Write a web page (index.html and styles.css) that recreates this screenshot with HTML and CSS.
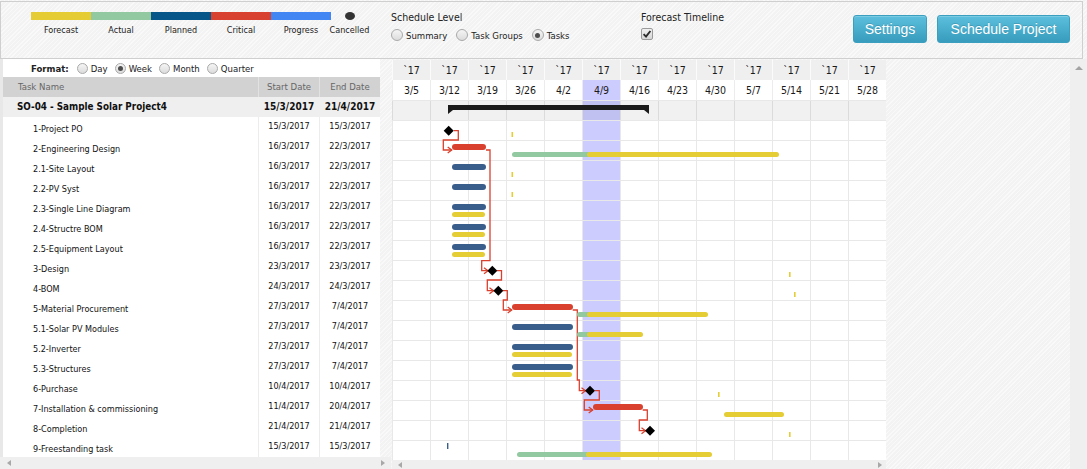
FILE: index.html
```html
<!DOCTYPE html>
<html lang="en">
<head>
<meta charset="utf-8">
<title>Schedule</title>
<link rel="stylesheet" href="styles.css">
</head>
<body>
<header class="toolbar">
  <div class="legend">
    <div class="lg-item"><span class="swatch sw-forecast"></span><span class="lg-label">Forecast</span></div>
    <div class="lg-item"><span class="swatch sw-actual"></span><span class="lg-label">Actual</span></div>
    <div class="lg-item"><span class="swatch sw-planned"></span><span class="lg-label">Planned</span></div>
    <div class="lg-item"><span class="swatch sw-critical"></span><span class="lg-label">Critical</span></div>
    <div class="lg-item"><span class="swatch sw-progress"></span><span class="lg-label">Progress</span></div>
    <div class="lg-item lg-cancel"><span class="dot"></span><span class="lg-label">Cancelled</span></div>
  </div>
  <div class="sched">
    <div class="group-title">Schedule Level</div>
    <div class="options">
      <label class="opt"><span class="rb"></span>Summary</label>
      <label class="opt"><span class="rb"></span>Task Groups</label>
      <label class="opt"><span class="rb on"></span>Tasks</label>
    </div>
  </div>
  <div class="forecast">
    <div class="group-title">Forecast Timeline</div>
    <span class="cb"><svg width="12" height="12" viewBox="0 0 12 12"><polyline points="2.6,6.2 5,8.6 9.4,3" fill="none" stroke="#2b2b2b" stroke-width="1.9"/></svg></span>
  </div>
  <div class="buttons">
    <button class="btn btn-settings">Settings</button>
    <button class="btn btn-schedule">Schedule Project</button>
  </div>
</header>

<main class="workspace">
  <section class="tasks">
    <div class="format">
      <span class="format-title">Format:</span>
      <label class="fopt"><span class="rb sm"></span>Day</label>
      <label class="fopt"><span class="rb sm on"></span>Week</label>
      <label class="fopt"><span class="rb sm"></span>Month</label>
      <label class="fopt"><span class="rb sm"></span>Quarter</label>
    </div>
    <div class="trow thead"><span class="tn">Task Name</span><span class="td">Start Date</span><span class="td">End Date</span></div>
    <div class="trow tsum"><span class="tn">SO-04 - Sample Solar Project4</span><span class="td">15/3/2017</span><span class="td">21/4/2017</span></div>
    <div class="trow"><span class="tn">1-Project PO</span><span class="td">15/3/2017</span><span class="td">15/3/2017</span></div>
    <div class="trow"><span class="tn">2-Engineering Design</span><span class="td">16/3/2017</span><span class="td">22/3/2017</span></div>
    <div class="trow"><span class="tn">2.1-Site Layout</span><span class="td">16/3/2017</span><span class="td">22/3/2017</span></div>
    <div class="trow"><span class="tn">2.2-PV Syst</span><span class="td">16/3/2017</span><span class="td">22/3/2017</span></div>
    <div class="trow"><span class="tn">2.3-Single Line Diagram</span><span class="td">16/3/2017</span><span class="td">22/3/2017</span></div>
    <div class="trow"><span class="tn">2.4-Structre BOM</span><span class="td">16/3/2017</span><span class="td">22/3/2017</span></div>
    <div class="trow"><span class="tn">2.5-Equipment Layout</span><span class="td">16/3/2017</span><span class="td">22/3/2017</span></div>
    <div class="trow"><span class="tn">3-Design</span><span class="td">23/3/2017</span><span class="td">23/3/2017</span></div>
    <div class="trow"><span class="tn">4-BOM</span><span class="td">24/3/2017</span><span class="td">24/3/2017</span></div>
    <div class="trow"><span class="tn">5-Material Procurement</span><span class="td">27/3/2017</span><span class="td">7/4/2017</span></div>
    <div class="trow"><span class="tn">5.1-Solar PV Modules</span><span class="td">27/3/2017</span><span class="td">7/4/2017</span></div>
    <div class="trow"><span class="tn">5.2-Inverter</span><span class="td">27/3/2017</span><span class="td">7/4/2017</span></div>
    <div class="trow"><span class="tn">5.3-Structures</span><span class="td">27/3/2017</span><span class="td">7/4/2017</span></div>
    <div class="trow"><span class="tn">6-Purchase</span><span class="td">10/4/2017</span><span class="td">10/4/2017</span></div>
    <div class="trow"><span class="tn">7-Installation &amp; commissioning</span><span class="td">11/4/2017</span><span class="td">20/4/2017</span></div>
    <div class="trow"><span class="tn">8-Completion</span><span class="td">21/4/2017</span><span class="td">21/4/2017</span></div>
    <div class="trow"><span class="tn">9-Freestanding task</span><span class="td">15/3/2017</span><span class="td">15/3/2017</span></div>
    <div class="hscroll hscroll-left"><span class="arr arr-l"></span><span class="arr arr-r"></span></div>
  </section>

  <section class="gantt">
    <div class="ghead gh1">
      <span>`17</span><span>`17</span><span>`17</span><span>`17</span><span>`17</span><span>`17</span><span>`17</span><span>`17</span><span>`17</span><span>`17</span><span>`17</span><span>`17</span><span>`17</span>
    </div>
    <div class="ghead gh2">
      <span>3/5</span><span>3/12</span><span>3/19</span><span>3/26</span><span>4/2</span><span class="today">4/9</span><span>4/16</span><span>4/23</span><span>4/30</span><span>5/7</span><span>5/14</span><span>5/21</span><span>5/28</span>
    </div>
    <div class="gbody">
      <div class="grow gsum"></div>
      <div class="grow"></div><div class="grow"></div><div class="grow"></div><div class="grow"></div><div class="grow"></div><div class="grow"></div>
      <div class="grow"></div><div class="grow"></div><div class="grow"></div><div class="grow"></div><div class="grow"></div><div class="grow"></div>
      <div class="grow"></div><div class="grow"></div><div class="grow"></div><div class="grow"></div><div class="grow"></div>
      <svg class="chart" width="494" height="360" viewBox="0 0 494 360">
        <!-- summary bar -->
        <polygon points="56,5 257,5 257,14 252,10 61,10 56,14" fill="#1b1b1b"/>
        <!-- connectors -->
        <g fill="none" stroke="#d9402d" stroke-width="1.3">
          <polyline points="61.7,30.7 66.3,30.7 66.3,40 51.3,40 51.3,50 59.7,50"/>
          <polyline points="55.7,47 59.7,50 55.7,53"/>
          <polyline points="94,50 98,50 98,160.7 89.7,160.7 89.7,170.7 96,170.7"/>
          <polyline points="92,167.7 96,170.7 92,173.7"/>
          <polyline points="105,170.7 109.5,170.7 109.5,180 95.3,180 95.3,190.7 101.5,190.7"/>
          <polyline points="97.5,187.7 101.5,190.7 97.5,193.7"/>
          <polyline points="111,190.7 115.3,190.7 115.3,200 111.3,200 111.3,210 119.7,210"/>
          <polyline points="115.7,207 119.7,210 115.7,213"/>
          <polyline points="180.7,210 185.3,210 185.3,280 187.3,280 187.3,290.7 193.5,290.7"/>
          <polyline points="189.5,287.7 193.5,290.7 189.5,293.7"/>
          <polyline points="203,290.7 207.3,290.7 207.3,300 192.3,300 192.3,310 200.7,310"/>
          <polyline points="196.7,307 200.7,310 196.7,313"/>
          <polyline points="250.7,310 255.3,310 255.3,320 247.3,320 247.3,330.7 253.5,330.7"/>
          <polyline points="249.5,327.7 253.5,330.7 249.5,333.7"/>
        </g>
        <!-- row 1 -->
        <rect x="119.5" y="32" width="1.6" height="5" fill="#e5cd35"/>
        <!-- row 2 -->
        <rect x="60" y="44" width="34" height="6" rx="3" fill="#d9402d"/>
        <rect x="120" y="52" width="78" height="5" rx="2.5" fill="#93c9a0"/>
        <rect x="195" y="52" width="192" height="5" rx="2.5" fill="#e5cd35"/>
        <!-- row 3,4 -->
        <rect x="60" y="64" width="34" height="6" rx="3" fill="#3a5e8c"/>
        <rect x="119.5" y="72" width="1.6" height="5" fill="#e5cd35"/>
        <rect x="60" y="84" width="34" height="6" rx="3" fill="#3a5e8c"/>
        <rect x="119.5" y="92" width="1.6" height="5" fill="#e5cd35"/>
        <!-- row 5,6,7 -->
        <rect x="60" y="104" width="34" height="6" rx="3" fill="#3a5e8c"/>
        <rect x="60" y="112" width="33" height="5" rx="2.5" fill="#e5cd35"/>
        <rect x="60" y="124" width="34" height="6" rx="3" fill="#3a5e8c"/>
        <rect x="60" y="132" width="33" height="5" rx="2.5" fill="#e5cd35"/>
        <rect x="60" y="144" width="34" height="6" rx="3" fill="#3a5e8c"/>
        <rect x="60" y="152" width="33" height="5" rx="2.5" fill="#e5cd35"/>
        <!-- row 8,9 ticks -->
        <rect x="397" y="172" width="1.6" height="5" fill="#e5cd35"/>
        <rect x="402" y="192" width="1.6" height="5" fill="#e5cd35"/>
        <!-- row 10 -->
        <rect x="120" y="204" width="61" height="6" rx="3" fill="#d9402d"/>
        <rect x="185" y="212" width="14" height="5" rx="2.5" fill="#93c9a0"/>
        <rect x="195" y="212" width="121" height="5" rx="2.5" fill="#e5cd35"/>
        <!-- row 11 -->
        <rect x="120" y="224" width="61" height="6" rx="3" fill="#3a5e8c"/>
        <rect x="185" y="232" width="14" height="5" rx="2.5" fill="#93c9a0"/>
        <rect x="195" y="232" width="56" height="5" rx="2.5" fill="#e5cd35"/>
        <!-- row 12,13 -->
        <rect x="120" y="244" width="61" height="6" rx="3" fill="#3a5e8c"/>
        <rect x="120" y="252" width="60" height="5" rx="2.5" fill="#e5cd35"/>
        <rect x="120" y="264" width="61" height="6" rx="3" fill="#3a5e8c"/>
        <rect x="120" y="272" width="60" height="5" rx="2.5" fill="#e5cd35"/>
        <!-- row 14 -->
        <rect x="326" y="292" width="1.6" height="5" fill="#e5cd35"/>
        <!-- row 15 -->
        <rect x="201" y="304" width="50" height="6" rx="3" fill="#d9402d"/>
        <rect x="332" y="312" width="60" height="5" rx="2.5" fill="#e5cd35"/>
        <!-- row 16 -->
        <rect x="397" y="332" width="1.6" height="5" fill="#e5cd35"/>
        <!-- row 17 -->
        <rect x="55" y="343" width="1.4" height="6" fill="#3a5e8c"/>
        <rect x="125" y="352" width="72" height="5" rx="2.5" fill="#93c9a0"/>
        <rect x="194" y="352" width="126" height="5" rx="2.5" fill="#e5cd35"/>
        <!-- milestones -->
        <g fill="#000">
          <path d="M51.7 30.7 L56.7 25.7 L61.7 30.7 L56.7 35.7 Z"/>
          <path d="M95.3 170.7 L100.3 165.7 L105.3 170.7 L100.3 175.7 Z"/>
          <path d="M101.3 190.7 L106.3 185.7 L111.3 190.7 L106.3 195.7 Z"/>
          <path d="M193 290.7 L198 285.7 L203 290.7 L198 295.7 Z"/>
          <path d="M253 330.7 L258 325.7 L263 330.7 L258 335.7 Z"/>
        </g>
      </svg>
    </div>
    <div class="hscroll hscroll-gantt"><span class="arr arr-l"></span><span class="arr arr-r"></span></div>
  </section>

  <div class="spacer"></div>
  <div class="vscroll"><span class="arr arr-u"></span></div>
</main>
</body>
</html>
```

FILE: styles.css
```css
* {
  box-sizing: border-box;
  margin: 0;
  padding: 0;
}

html, body {
  width: 1087px;
  height: 469px;
  overflow: hidden;
}

body {
  font-family: "DejaVu Sans Condensed", "DejaVu Sans", sans-serif;
  color: #1a1a1a;
  background-color: #f6f6f6;
  background-image: repeating-linear-gradient(135deg, #f9f9f9 0 1px, #f3f3f3 1px 3px);
}

/* ---------- toolbar ---------- */
.toolbar {
  display: flex;
  align-items: flex-start;
  width: 1083px;
  height: 58px;
  margin-top: 1px;
  padding: 9px 12px 0 30px;
  border: 1px solid #cfcfcf;
}

.legend {
  display: flex;
}

.lg-item {
  display: flex;
  flex-direction: column;
  align-items: center;
  width: 60px;
}

.lg-cancel {
  width: 37px;
}

.swatch {
  display: block;
  width: 60px;
  height: 8px;
  margin-top: 1px;
}

.sw-forecast { background: #e5cc34; }
.sw-actual { background: #93c9a0; }
.sw-planned { background: #07568a; }
.sw-critical { background: #d8412f; }
.sw-progress { background: #4286f4; }

.dot {
  display: block;
  width: 10px;
  height: 8px;
  margin-top: 1px;
  border-radius: 50%;
  background: #333;
}

.lg-label {
  margin-top: 4px;
  font-size: 9px;
  line-height: 12px;
  color: #222;
  white-space: nowrap;
}

.sched {
  width: 250px;
  margin-left: 23px;
}

.group-title {
  font-size: 10.5px;
  line-height: 13px;
  color: #222;
  white-space: nowrap;
}

.options {
  display: flex;
  align-items: center;
  height: 12px;
  margin-top: 5px;
}

.opt {
  display: flex;
  align-items: center;
  margin-right: 9px;
  font-size: 9.5px;
  color: #222;
  white-space: nowrap;
}

.rb {
  position: relative;
  display: block;
  flex: none;
  width: 12px;
  height: 12px;
  margin-right: 3px;
  border: 1px solid #a9a9a9;
  border-radius: 50%;
  background: linear-gradient(#f5f5f5, #dcdcdc);
}

.rb.sm {
  width: 11px;
  height: 11px;
}

.rb.on::after {
  content: "";
  position: absolute;
  left: 2.5px;
  top: 2.5px;
  width: 5px;
  height: 5px;
  border-radius: 50%;
  background: #4d4d4d;
}

.rb.sm.on::after {
  left: 2px;
  top: 2px;
}

.cb {
  display: block;
  width: 12px;
  height: 12px;
  margin-top: 4px;
  border: 1px solid #9a9a9a;
  border-radius: 2px;
  background: linear-gradient(#f0f0f0, #d6d6d6);
}

.cb svg {
  display: block;
  margin: -1px 0 0 -1px;
}

.buttons {
  display: flex;
  gap: 10px;
  margin-left: auto;
  margin-top: 4px;
}

.btn {
  height: 28px;
  border: 1px solid #3b9fc0;
  border-radius: 3px;
  background: linear-gradient(#5cbfdd, #379cbd);
  color: #fff;
  font-family: "Liberation Sans", Arial, sans-serif;
  font-size: 14px;
  text-shadow: 0 -1px 0 rgba(0, 0, 0, 0.15);
  box-shadow: inset 0 1px 0 rgba(255, 255, 255, 0.2);
}

.btn-settings { width: 74px; }
.btn-schedule { width: 133px; }

/* ---------- workspace ---------- */
.workspace {
  display: flex;
  height: 410px;
}

/* task table */
.tasks {
  display: flex;
  flex-direction: column;
  width: 391px;
  flex: none;
}

.format {
  display: flex;
  align-items: center;
  width: 380px;
  height: 18px;
  padding-left: 28px;
  background: #fff;
  border-left: 3px solid #e8e8e8;
  font-size: 9.5px;
  color: #222;
}

.format-title {
  margin-right: 8px;
  font-weight: bold;
}

.fopt {
  display: flex;
  align-items: center;
  margin-right: 7px;
  white-space: nowrap;
}

.trow {
  display: grid;
  grid-template-columns: 255px 61px 61px;
  width: 380px;
  height: 20px;
  background: #fff;
  border-left: 3px solid #e8e8e8;
  font-size: 9px;
  color: #111;
}

.tn {
  padding: 4px 0 0 30px;
  line-height: 16px;
  white-space: nowrap;
}

.td {
  text-align: center;
  line-height: 19px;
  border-left: 1px solid #ececec;
  white-space: nowrap;
}

.thead {
  background: #d2d2d2;
  color: #666;
  font-size: 9.5px;
}

.thead .tn {
  padding: 0 0 0 15px;
  line-height: 20px;
}

.thead .td {
  line-height: 20px;
  border-left-color: #e2e2e2;
}

.tsum {
  background: #efefef;
  font-weight: bold;
  font-size: 9.8px;
  color: #111;
}

.tsum .tn {
  padding: 0 0 0 14px;
  line-height: 20px;
}

.tsum .td {
  font-size: 10px;
  line-height: 20px;
  border-left-color: #efefef;
}

.hscroll {
  display: flex;
  align-items: center;
  justify-content: space-between;
  background: #efefef;
}

.hscroll-left {
  width: 391px;
  height: 12px;
  padding: 0 6px 0 7px;
}

.arr {
  display: block;
  width: 0;
  height: 0;
  border: 3px solid transparent;
}

.arr-l {
  border-left-width: 0;
  border-right: 4px solid #a8a8a8;
}

.arr-r {
  border-right-width: 0;
  border-left: 4px solid #a8a8a8;
}

.arr-u {
  border-width: 0 4px 4px 4px;
  border-bottom-color: #a3a3a3;
  margin: 7px auto 0;
}

/* gantt */
.gantt {
  display: flex;
  flex-direction: column;
  width: 494px;
  flex: none;
  margin-left: 1px;
  margin-top: 1px;
}

.ghead {
  display: grid;
  grid-template-columns: repeat(13, 38px);
  height: 20px;
  font-size: 10.5px;
  color: #1a1a1a;
}

.ghead span {
  text-align: center;
  line-height: 20px;
  border-left: 1px solid #fbfbfb;
}

.gh1 {
  background: #efefef;
}

.gh2 {
  background: #fff;
}

.gh2 span {
  border-left-color: #ececec;
}

.gh2 .today {
  background: #ccccff;
}

.gbody {
  position: relative;
  height: 360px;
  background-color: #fff;
  background-image:
    repeating-linear-gradient(90deg, #e8e8e8 0 1px, transparent 1px 38px),
    linear-gradient(90deg, transparent 191px, #ccccff 191px 228px, transparent 228px);
}

.grow {
  height: 20px;
  border-top: 1px solid #e8e8e8;
}

.gsum {
  background: rgba(0, 0, 0, 0.055);
}

.chart {
  position: absolute;
  left: 0;
  top: 0;
}

.hscroll-gantt {
  height: 9px;
  padding: 0 4px 0 6px;
}

.spacer {
  flex: 1;
}

.vscroll {
  width: 17px;
  flex: none;
  background: #efefef;
}
```
